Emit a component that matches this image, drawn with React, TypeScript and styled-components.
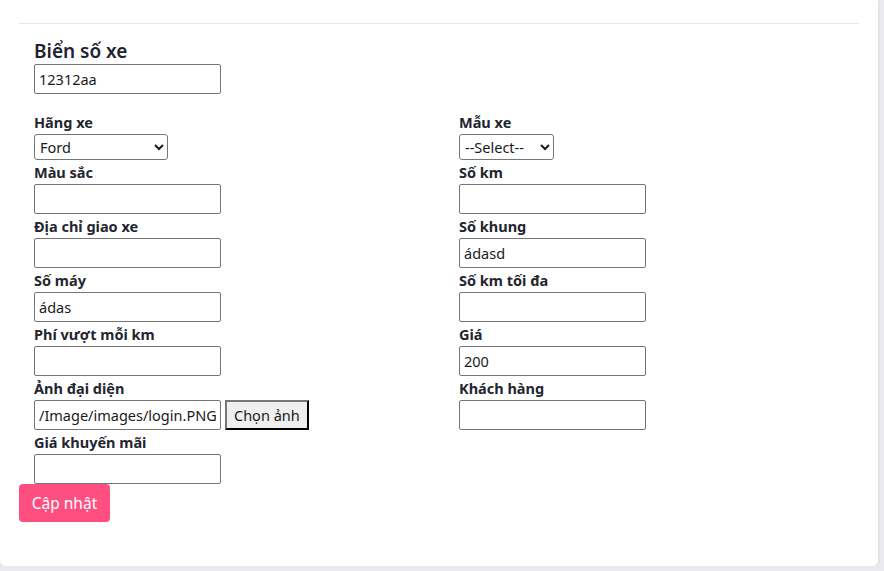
import React from 'react';
import styled, { createGlobalStyle } from 'styled-components';

const GlobalStyle = createGlobalStyle`
  html, body {
    margin: 0;
    padding: 0;
    background: #e9e9ef;
    font-family: "Noto Sans", "Open Sans", sans-serif;
    color: #212529;
  }
`;

const Card = styled.div`
  width: 878px;
  height: 566px;
  box-sizing: border-box;
  background: #ffffff;
  border-radius: 0 0 5px 5px;
  box-shadow: 0 1px 3px rgba(60, 60, 90, 0.12);
  padding: 23px 19px 0;
`;

const Divider = styled.hr`
  margin: 0;
  width: 840px;
  border: 0;
  border-top: 1px solid #e6e6e6;
`;

const Fields = styled.div`
  padding: 14px 0 0 15px;
`;

const Title = styled.label`
  display: block;
  font-size: 19px;
  font-weight: 600;
  line-height: 26px;
  height: 26px;
  color: #1f2230;
`;

const Grid = styled.div`
  display: grid;
  grid-template-columns: 425px 1fr;
  margin-top: 16px;
`;

const Field = styled.div`
  display: flex;
  flex-direction: column;
  align-items: flex-start;
`;

const Label = styled.label`
  font-size: 14.5px;
  font-weight: 700;
  line-height: 24px;
  height: 24px;
  color: #23252f;
`;

const TextInput = styled.input`
  box-sizing: border-box;
  width: 187px;
  height: 30px;
  padding: 0 4px;
  border: 1px solid #767676;
  border-radius: 2px;
  font-family: "Noto Sans", sans-serif;
  font-size: 14.5px;
  color: #1a1a1a;
  background: #fff;
`;

const Select = styled.select<{ $w: number }>`
  box-sizing: border-box;
  width: ${(p) => p.$w}px;
  height: 26px;
  padding: 0 0 0 1px;
  border: 1px solid #767676;
  border-radius: 3px;
  font-family: "Noto Sans", sans-serif;
  font-size: 14.5px;
  color: #1a1a1a;
  background: #fff;
`;

const FileRow = styled.div`
  display: flex;
  align-items: center;
  gap: 4px;
`;

const PickButton = styled.button`
  box-sizing: border-box;
  height: 30px;
  padding: 0 7px;
  background: #efefef;
  border: 2px outset #767676;
  border-right-color: #222;
  border-bottom-color: #222;
  font-family: "Noto Sans", sans-serif;
  font-size: 14.5px;
  color: #1a1a1a;
`;

const SubmitButton = styled.button`
  display: block;
  height: 38px;
  width: 91px;
  border: 0;
  border-radius: 4px;
  background: #fe4f80;
  color: #ffffff;
  font-family: "Noto Sans", sans-serif;
  font-size: 15.5px;
`;

export default function App() {
  return (
    <>
      <GlobalStyle />
      <Card>
        <Divider />
        <Fields>
          <Title>Biển số xe</Title>
          <TextInput defaultValue="12312aa" />
          <Grid>
            <Field>
              <Label>Hãng xe</Label>
              <Select $w={134} defaultValue="Ford">
                <option>Ford</option>
                <option>Toyota</option>
              </Select>
            </Field>
            <Field>
              <Label>Mẫu xe</Label>
              <Select $w={95} defaultValue="--Select--">
                <option>--Select--</option>
              </Select>
            </Field>
            <Field>
              <Label>Màu sắc</Label>
              <TextInput />
            </Field>
            <Field>
              <Label>Số km</Label>
              <TextInput />
            </Field>
            <Field>
              <Label>Địa chỉ giao xe</Label>
              <TextInput />
            </Field>
            <Field>
              <Label>Số khung</Label>
              <TextInput defaultValue="ádasd" />
            </Field>
            <Field>
              <Label>Số máy</Label>
              <TextInput defaultValue="ádas" />
            </Field>
            <Field>
              <Label>Số km tối đa</Label>
              <TextInput />
            </Field>
            <Field>
              <Label>Phí vượt mỗi km</Label>
              <TextInput />
            </Field>
            <Field>
              <Label>Giá</Label>
              <TextInput defaultValue="200" />
            </Field>
            <Field>
              <Label>Ảnh đại diện</Label>
              <FileRow>
                <TextInput defaultValue="/Image/images/login.PNG" />
                <PickButton>Chọn ảnh</PickButton>
              </FileRow>
            </Field>
            <Field>
              <Label>Khách hàng</Label>
              <TextInput />
            </Field>
            <Field>
              <Label>Giá khuyến mãi</Label>
              <TextInput />
            </Field>
          </Grid>
        </Fields>
        <SubmitButton>Cập nhật</SubmitButton>
      </Card>
    </>
  );
}
